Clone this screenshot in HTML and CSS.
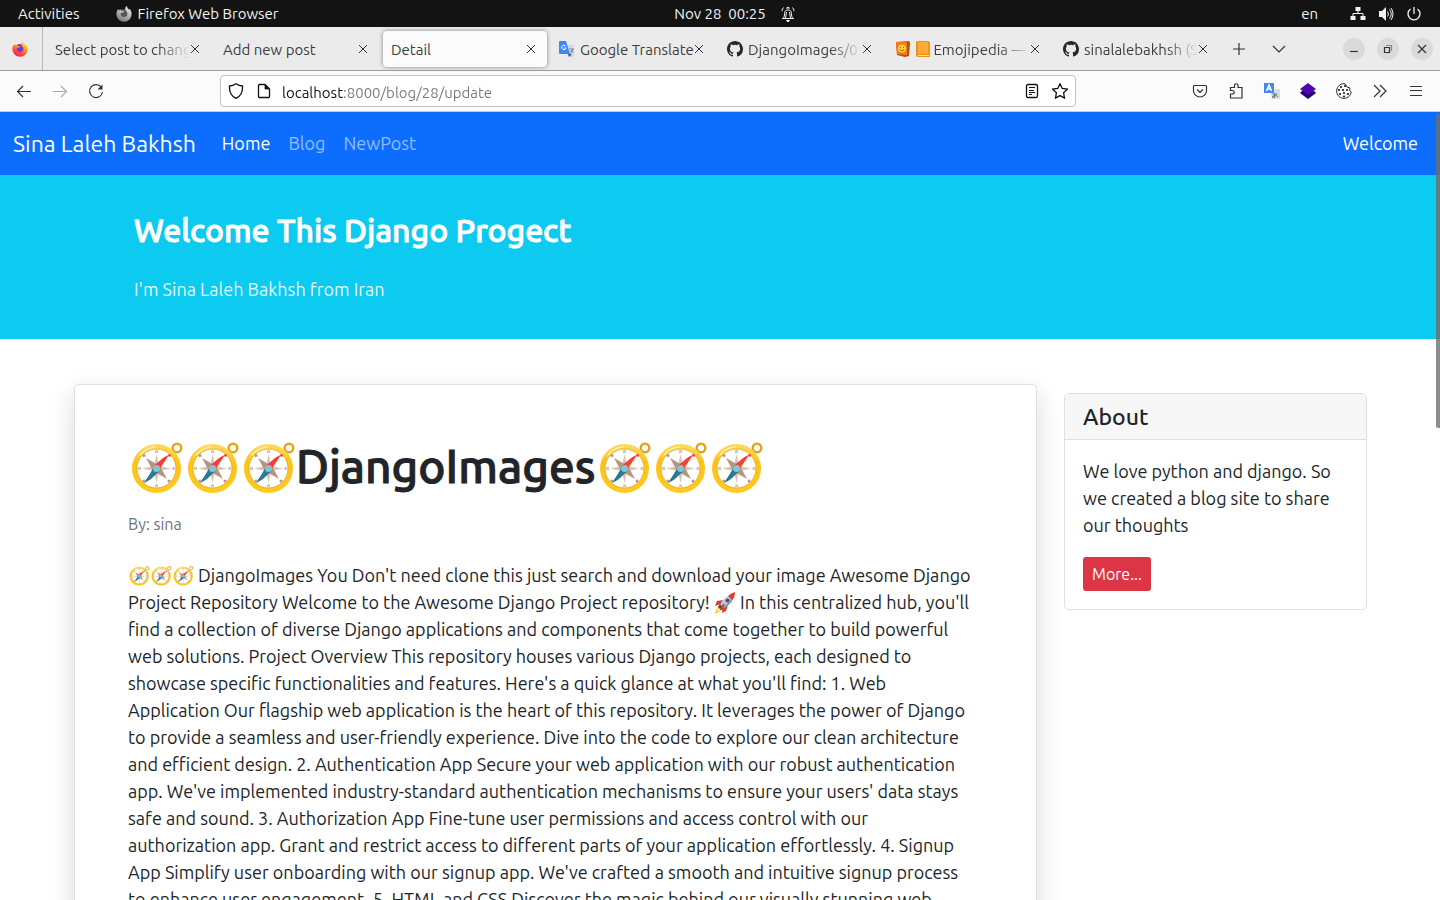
FILE: index.html
```html
<!DOCTYPE html>
<html lang="en">
<head>
<meta charset="utf-8">
<title>Detail</title>
<link rel="stylesheet" href="styles.css">
</head>
<body>
<svg class="defs" aria-hidden="true">
  <defs>
    <linearGradient id="gold" x1="0" y1="0" x2="0" y2="1"><stop offset="0" stop-color="#ffd95a"/><stop offset=".35" stop-color="#fcc21b"/><stop offset="1" stop-color="#ffc91f"/></linearGradient>
    <linearGradient id="fox" x1=".8" y1="0" x2=".3" y2="1"><stop offset="0" stop-color="#fff44f"/><stop offset=".35" stop-color="#ffb01f"/><stop offset=".65" stop-color="#ff5a36"/><stop offset="1" stop-color="#f0187a"/></linearGradient>
    <linearGradient id="foxgray" x1=".8" y1="0" x2=".3" y2="1"><stop offset="0" stop-color="#f2f2f2"/><stop offset="1" stop-color="#777"/></linearGradient>
    <symbol id="compass" viewBox="0 0 56 56">
      <circle cx="49" cy="8" r="4.300" fill="none" stroke="#e2a610" stroke-width="2.400"/>
      <circle cx="28.500" cy="28.500" r="22" fill="#fff" stroke="url(#gold)" stroke-width="5"/>
      <circle cx="28.500" cy="28.500" r="19.500" fill="none" stroke="#e0a100" stroke-width=".7"/>
      <path d="M12 15Q18 8 27 7" fill="none" stroke="#fff0a0" stroke-width="1.600" stroke-linecap="round"/>
      <g fill="#dcc3ae"><path d="M28.500 14l2.500 12 12 2.500-12 2.500-2.500 12-2.500-12-12-2.500 12-2.500z"/><path d="M27 10h3v3h-3zM27 44.500h3v3h-3zM10 27h3v3h-3zM44.500 27h3v3h-3z"/></g>
      <g fill="#b69582"><path d="M18 18l14 8-6 7zM39 39l-14-8 6-7z"/><circle cx="16" cy="15.500" r="1.500"/><circle cx="16" cy="41" r="1.500"/><circle cx="41" cy="41" r="1.500"/></g>
      <path d="M25.500 26l9.500-8q3-2 5.500-3-1 3-3.500 6l-6 9z" fill="#f44336"/>
      <path d="M31.500 31l-8.500 8q-3 2-6.500 4 1.500-4 4-7l5.500-9z" fill="#2a7a90"/>
      <circle cx="41.500" cy="15.500" r="1.400" fill="#f44336"/>
      <circle cx="28.500" cy="28.500" r="3.500" fill="#82c4d8"/>
    </symbol>
    <symbol id="rocket" viewBox="0 0 22 22">
      <path d="M5 13l-3 5-1 4 4-2 4-3z" fill="#ffca28"/><path d="M4 16l-1 4 4-2z" fill="#fff3a0"/>
      <path d="M9 8L3 9l-2 5 6-2zM14 13l-2 6-4 2 1-6z" fill="#d83b30"/>
      <path d="M6 13Q9 5 20 1q1 9-11 16z" fill="#b8cdd6"/><path d="M9 15Q17 10 20 2q0 9-11 15z" fill="#819ba8"/>
      <path d="M14 4q3-3 7-4 0 5-3 8z" fill="#e53935"/><circle cx="13.500" cy="8.500" r="2" fill="#315b70"/>
      <path d="M6 12l4 5-3 1-3-3z" fill="#444f58"/><path d="M10 12l-3 6" stroke="#d83b30" stroke-width="2"/>
    </symbol>
    <symbol id="firefox" viewBox="0 0 16 16">
      <path d="M8 15.800A7.500 7.500 0 0 1 .4 8.200C.3 6 1.200 4.100 2.400 3l.5 1.500L4.300 3c.2 1 .8 1.500 2 1.900 1.100.1 1.900.1 2.200.3L7 6.400 4.600 7.500C4.500 9.800 6 11 8 11c2.600 0 4-2 3.200-4.200C10.700 5.200 9 4 9.200 2.400 9.400 1.200 10.200.4 11 0c0 2.100 1.200 2.900 2.200 3.800l.4-1C15 4.600 15.700 6.200 15.600 8.500A7.500 7.500 0 0 1 8 15.800z"/>
    </symbol>
    <symbol id="github" viewBox="0 0 16 16"><path fill="#24292f" d="M8 0C3.580 0 0 3.580 0 8c0 3.540 2.290 6.530 5.470 7.590.4.070.55-.17.55-.38 0-.19-.01-.82-.01-1.490-2.010.37-2.530-.49-2.690-.94-.09-.23-.48-.94-.82-1.130-.28-.15-.68-.52-.01-.53.63-.01 1.080.58 1.230.82.72 1.210 1.870.87 2.330.66.07-.52.28-.87.51-1.070-1.780-.2-3.640-.89-3.640-3.950 0-.87.31-1.590.82-2.150-.08-.2-.36-1.020.08-2.120 0 0 .67-.21 2.200.82a7.600 7.600 0 0 1 4 0c1.530-1.040 2.200-.82 2.200-.82.44 1.100.16 1.920.08 2.120.51.56.82 1.270.82 2.150 0 3.070-1.870 3.750-3.650 3.950.29.25.54.73.54 1.480 0 1.070-.01 1.930-.01 2.200 0 .21.15.46.55.38A8 8 0 0 0 16 8c0-4.420-3.580-8-8-8z"/></symbol>
    <symbol id="close" viewBox="0 0 10 10"><path d="M1 1l8 8M9 1L1 9" fill="none" stroke="#333" stroke-width="1"/></symbol>
  </defs>
</svg>

<header class="desktop">
  <div class="desktop-left">
    <span>Activities</span>
    <span class="app"><svg class="i16" viewBox="0 0 16 16"><circle cx="8" cy="8" r="5" fill="#555"/><use href="#firefox" fill="url(#foxgray)"/></svg>Firefox Web Browser</span>
  </div>
  <div class="clock"><time>Nov 28&nbsp; 00:25</time>
    <svg class="i16" viewBox="0 0 16 16" fill="none" stroke="#f2f2f2"><path d="M2 12.500h12M3.500 12c1.500-2 .5-4 1.500-6.500.7-2 5.300-2 6 0 1 2.500 0 4.500 1.500 6.500M6.500 6c-.8 2-.2 4-1 6M9.500 6c.8 2 .2 4 1 6M7 3V1.500h2V3M3.500 1.500Q2 3 2 5M12.500 1.500Q14 3 14 5"/><path d="M6.500 14.500h3L8 16z" fill="#f2f2f2"/></svg>
  </div>
  <div class="status">
    <span class="lang">en</span>
    <svg class="i16" viewBox="0 0 16 16" fill="#f2f2f2"><path d="M5.500 1h5v4h-5zM.5 10h5v4h-5zM10.500 10h5v4h-5z"/><path d="M8 5v3M3 10V7.500h10V10" fill="none" stroke="#f2f2f2"/></svg>
    <svg class="i16" viewBox="0 0 16 16" fill="#f2f2f2"><path d="M1 5h3l4-4v14l-4-4H1z"/><path d="M9.500 5.500q2 2.500 0 5M11.500 3.500q3.500 4.500 0 9M13 2q4 6 0 12" fill="none" stroke="#f2f2f2"/></svg>
    <svg class="i16" viewBox="0 0 16 16" fill="none" stroke="#f2f2f2" stroke-width="1.300"><path d="M8 1v7M4.500 3a6 6 0 1 0 7 0"/></svg>
  </div>
</header>

<div class="tabs">
  <div class="pinned"><svg class="i16" viewBox="0 0 16 16"><circle cx="8" cy="8" r="5" fill="#7139d6"/><use href="#firefox" fill="url(#fox)"/></svg></div>
  <div class="tab"><span class="title fade">Select post to change</span><button class="close" aria-label="Close tab"><svg><use href="#close"/></svg></button></div>
  <div class="tab"><span class="title">Add new post</span><button class="close" aria-label="Close tab"><svg><use href="#close"/></svg></button></div>
  <div class="tab active"><span class="title">Detail</span><button class="close" aria-label="Close tab"><svg><use href="#close"/></svg></button></div>
  <div class="tab"><svg class="i16" viewBox="0 0 16 16"><path d="M8 4h7v12H9z" fill="#d9d9d9"/><path d="M9 13h4l-3 3z" fill="#3651a8"/><path d="M1 0h6l4 13H1a1 1 0 0 1-1-1V1a1 1 0 0 1 1-1z" fill="#4285f4"/><path d="M6.500 5A2.200 2.200 0 1 0 7 7H5" stroke="#fff" fill="none"/><path d="M10.500 8H15M11.500 12L14 8M12 9l2.500 3" stroke="#6c8794" fill="none"/></svg><span class="title">Google Translate</span><button class="close" aria-label="Close tab"><svg><use href="#close"/></svg></button></div>
  <div class="tab"><svg class="i16"><use href="#github"/></svg><span class="title fade">DjangoImages/0</span><button class="close" aria-label="Close tab"><svg><use href="#close"/></svg></button></div>
  <div class="tab"><svg class="i16" viewBox="0 0 16 16"><path d="M1 1l13-1 1 2-1 13-4 1-8-2z" fill="#ba4b15"/><path d="M1 1h11v13L2 13z" fill="#f57c18"/><circle cx="7" cy="7.500" r="4" fill="#ffd13b"/><path d="M5.500 6v1M8.500 6v1M4.700 8.500q2.300 2.500 4.600 0" fill="none" stroke="#8a4a0b" stroke-width=".8"/></svg><span class="title fade"><svg class="book" viewBox="0 0 14 16"><path d="M1 0h11a2 2 0 0 1 2 2v14H2a2 2 0 0 1-2-2V1z" fill="#f39019"/><path d="M2 1h10v12H2z" fill="#ffa936"/><path d="M2 14h11v1H2z" fill="#ffe0aa"/></svg> Emojipedia —</span><button class="close" aria-label="Close tab"><svg><use href="#close"/></svg></button></div>
  <div class="tab"><svg class="i16"><use href="#github"/></svg><span class="title fade">sinalalebakhsh (S</span><button class="close" aria-label="Close tab"><svg><use href="#close"/></svg></button></div>
  <button class="tool" aria-label="New tab"><svg class="i16" viewBox="0 0 16 16"><path d="M8 2v12M2 8h12"/></svg></button>
  <button class="tool" aria-label="List all tabs"><svg class="i16" viewBox="0 0 16 16"><path d="M2 5l6 6 6-6"/></svg></button>
  <div class="window-controls">
    <button aria-label="Minimize"><svg class="i16" viewBox="0 0 16 16"><path d="M4 10.500h8"/></svg></button>
    <button aria-label="Restore"><svg class="i16" viewBox="0 0 16 16"><path d="M4.500 6.500h5v5h-5z"/><path d="M6 4.500h5.500V10" stroke="#888"/></svg></button>
    <button aria-label="Close"><svg class="i16" viewBox="0 0 16 16"><path d="M4 4l8 8M12 4l-8 8"/></svg></button>
  </div>
</div>

<div class="toolbar">
  <div class="group">
    <button class="tool" aria-label="Back"><svg class="i16" viewBox="0 0 16 16"><path d="M15 8.500H1.500M7 3L1.500 8.500 7 14"/></svg></button>
    <button class="tool dim" aria-label="Forward"><svg class="i16" viewBox="0 0 16 16"><path d="M1 8.500h13.500M9 3l5.500 5.500L9 14"/></svg></button>
    <button class="tool" aria-label="Reload"><svg class="i16" viewBox="0 0 16 16"><path d="M13.500 4.500A6.500 6.500 0 1 0 14.500 9"/><path d="M14.500 1.500v5h-5z" fill="#333" stroke="none"/></svg></button>
  </div>
  <div class="address">
    <svg class="i16" viewBox="0 0 16 16"><path d="M8 .8q3 2 6.500 2.200Q15 12 8 15.300 1 12 1.500 3 5 2.800 8 .8z"/></svg>
    <svg class="i16" viewBox="0 0 16 16"><path d="M3.500 1.500H9L13.500 6v7.500a1 1 0 0 1-1 1h-9a1 1 0 0 1-1-1v-11a1 1 0 0 1 1-1z"/><path d="M9 1.500V6h4.500z" fill="#111" stroke-width=".8"/></svg>
    <input class="url" type="text" aria-label="Address" value="localhost:8000/blog/28/update">
    <svg class="i16" viewBox="0 0 16 16"><rect x="2.500" y="1.500" width="11" height="13" rx="1.500"/><path d="M5 4.500h6M5 7.500h5M5 9.500h6M5 11.500h3" stroke-width="1"/></svg>
    <svg class="i16" viewBox="0 0 16 16"><path d="M8 .8l2.200 4.700 5.200.7-3.800 3.600.9 5.300L8 12.600l-4.500 2.500.9-5.300L.6 6.200l5.200-.7z"/></svg>
  </div>
  <div class="group">
    <button class="tool" aria-label="Pocket"><svg class="i16" viewBox="0 0 16 16"><path d="M2.500 2.500h11a1 1 0 0 1 1 1V7.500a6.500 6.500 0 0 1-13 0v-4a1 1 0 0 1 1-1zM5 6.500l3 3 3-3"/></svg></button>
    <button class="tool" aria-label="Extensions"><svg class="i16" viewBox="0 0 16 16"><path d="M2.500 6V4.500h4V2.500a1.700 1.700 0 0 1 3.500 0v2h4v10.500H2.500V11h2a1.500 1.500 0 0 0 0-3.500h-2z"/></svg></button>
    <button class="tool" aria-label="Translate"><svg class="i16" viewBox="0 0 16 16"><path d="M6 6h10v10H8z" fill="#d7dde0" stroke="none"/><path d="M0 0h10v10H0z" fill="#4285f4" stroke="none"/><path d="M2.500 8L5 2l2.500 6M3.500 6h3" stroke="#fff" stroke-width="1.500"/><path d="M8.500 11h4M10.500 10q-1 3 0 5M13 10.500q-5 6-4.500 3 3-2 5.500 0" stroke="#607d8b" stroke-width="1"/></svg></button>
    <button class="tool" aria-label="Layers extension"><svg class="i16" viewBox="0 0 16 16"><path d="M0 10l2-2h12l2 2-8 6z" fill="#24006f" stroke="none"/><path d="M0 6l8-6 8 6-8 6z" fill="#4d08b0" stroke="none"/></svg></button>
    <button class="tool" aria-label="Cookie extension"><svg class="i16" viewBox="0 0 16 16"><path d="M9 .7A7.400 7.400 0 1 0 15.300 9L13.500 7.500 14 5 11 4z" stroke-width="1"/><g fill="#111" stroke="none"><circle cx="5" cy="4" r="1"/><circle cx="9" cy="3" r="1"/><circle cx="3" cy="7" r="1"/><circle cx="7" cy="7" r="1.100"/><circle cx="11" cy="7" r="1"/><circle cx="4" cy="11" r="1.100"/><circle cx="8" cy="10" r="1"/><circle cx="12" cy="11" r="1.100"/><circle cx="8" cy="13.500" r="1"/></g></svg></button>
    <button class="tool" aria-label="More tools"><svg class="i16" viewBox="0 0 16 16"><path d="M2 2l6 6-6 6M8 2l6 6-6 6"/></svg></button>
    <button class="tool" aria-label="Menu"><svg class="i16" viewBox="0 0 16 16"><path d="M2 3.500h12M2 7.500h12M2 12.500h12" stroke-width="1"/></svg></button>
  </div>
</div>

<div class="page">
  <nav class="navbar">
    <a class="brand" href="#">Sina Laleh Bakhsh</a>
    <a class="current" href="#">Home</a>
    <a href="#">Blog</a>
    <a href="#">NewPost</a>
    <span class="welcome">Welcome</span>
  </nav>
  <section class="hero">
    <div class="container">
      <h2>Welcome This Django Progect</h2>
      <p>I'm Sina Laleh Bakhsh from Iran</p>
    </div>
  </section>
  <main class="container content">
    <article class="card post">
      <h1><svg class="emoji"><use href="#compass"/></svg><svg class="emoji"><use href="#compass"/></svg><svg class="emoji"><use href="#compass"/></svg>DjangoImages<svg class="emoji"><use href="#compass"/></svg><svg class="emoji"><use href="#compass"/></svg><svg class="emoji"><use href="#compass"/></svg></h1>
      <p class="byline">By: sina</p>
      <p class="text"><svg class="emoji"><use href="#compass"/></svg><svg class="emoji"><use href="#compass"/></svg><svg class="emoji"><use href="#compass"/></svg> DjangoImages You Don't need clone this just search and download your image Awesome Django<br>
      Project Repository Welcome to the Awesome Django Project repository! <svg class="emoji"><use href="#rocket"/></svg> In this centralized hub, you'll<br>
      find a collection of diverse Django applications and components that come together to build powerful<br>
      web solutions. Project Overview This repository houses various Django projects, each designed to<br>
      showcase specific functionalities and features. Here's a quick glance at what you'll find: 1. Web<br>
      Application Our flagship web application is the heart of this repository. It leverages the power of Django<br>
      to provide a seamless and user-friendly experience. Dive into the code to explore our clean architecture<br>
      and efficient design. 2. Authentication App Secure your web application with our robust authentication<br>
      app. We've implemented industry-standard authentication mechanisms to ensure your users' data stays<br>
      safe and sound. 3. Authorization App Fine-tune user permissions and access control with our<br>
      authorization app. Grant and restrict access to different parts of your application effortlessly. 4. Signup<br>
      App Simplify user onboarding with our signup app. We've crafted a smooth and intuitive signup process<br>
      to enhance user engagement. 5. HTML and CSS Discover the magic behind our visually stunning web</p>
    </article>
    <aside class="card about">
      <h5>About</h5>
      <div class="about-body">
        <p>We love python and django. So we created a blog site to share our thoughts</p>
        <a class="more" href="#">More...</a>
      </div>
    </aside>
  </main>
  <div class="scroll-thumb"></div>
</div>
</body>
</html>
```
FILE: styles.css
```css
* { box-sizing: border-box; }
body {
  margin: 0;
  height: 100vh;
  overflow: hidden;
  display: flex;
  flex-direction: column;
  font-family: Ubuntu, "Noto Sans", sans-serif;
  font-size: 18px;
  line-height: 27px;
  color: #212529;
  background: #fff;
}
h1, h2, h5, p { margin: 0; font-weight: 400; }
h1, h2, h5 { font-weight: 500; }
h1, h2 { -webkit-text-stroke: 1px currentColor; }
a { color: inherit; text-decoration: none; }
button { padding: 0; border: 0; background: none; font: inherit; }
svg { flex: none; }
.defs { position: absolute; width: 0; height: 0; }
.i16 { width: 16px; height: 16px; }

.desktop {
  flex: none;
  height: 27px;
  display: grid;
  grid-template-columns: 1fr auto 1fr;
  align-items: center;
  padding: 0 18px;
  background: #131313;
  color: #f2f2f2;
  font-size: 15px;
}
.desktop-left, .clock, .status, .app { display: flex; align-items: center; }
.desktop-left { gap: 36px; }
.app { gap: 6px; }
.clock { gap: 14px; padding-left: 30px; }
.status { justify-content: flex-end; gap: 12px; }
.lang { padding-right: 20px; }

.tabs {
  flex: none;
  height: 44px;
  display: flex;
  align-items: center;
  background: #ebebeb;
  border-bottom: 1px solid #9e9ea0;
  color: #3d3d3d;
  font-size: 15px;
}
.pinned {
  width: 43px;
  height: 43px;
  margin-right: 4px;
  padding-left: 12px;
  display: flex;
  align-items: center;
  border-right: 1px solid #b8b8b8;
}
.tab {
  flex: 0 1 164px;
  min-width: 0;
  height: 36px;
  margin-right: 4px;
  padding: 0 8px;
  display: flex;
  align-items: center;
  gap: 5px;
  border-radius: 4px;
}
.tab.active { background: #fbfbfb; box-shadow: 0 0 4px rgba(0, 0, 0, .45); }
.title { flex: 1; min-width: 0; padding-top: 2px; overflow: hidden; white-space: nowrap; }
.book { width: 14px; height: 16px; vertical-align: -2px; }
.fade {
  -webkit-mask-image: linear-gradient(to left, transparent, #000 32px);
  mask-image: linear-gradient(to left, transparent, #000 32px);
}
.close { width: 16px; height: 16px; margin-left: -8px; display: flex; align-items: center; justify-content: center; }
.close svg { width: 10px; height: 10px; }
.tool { width: 36px; height: 32px; display: flex; align-items: center; justify-content: center; }
.tool svg, .window-controls svg { fill: none; stroke: #333; stroke-width: 1.2; }
.tabs > .tool { width: 40px; flex: none; }
.tab + .tool { margin-left: -4px; }
.dim { opacity: .4; }
.window-controls { margin-left: auto; padding-right: 7px; display: flex; gap: 12px; }
.window-controls button {
  width: 22px;
  height: 22px;
  display: flex;
  align-items: center;
  justify-content: center;
  border-radius: 50%;
  background: #dadada;
}

.toolbar {
  flex: none;
  height: 41px;
  display: flex;
  align-items: center;
  justify-content: space-between;
  gap: 106px;
  padding: 0 6px;
  background: #fbfbfb;
  border-bottom: 1px solid #ccc;
}
.group { flex: none; display: flex; }
.address {
  flex: 1;
  height: 32px;
  display: flex;
  align-items: center;
  gap: 12px;
  padding: 0 7px;
  background: #fff;
  border: 1px solid #c3c3c5;
  border-radius: 4px;
}
.address svg { fill: none; stroke: #111; stroke-width: 1.3; }
.url {
  flex: 1;
  min-width: 0;
  height: 26px;
  margin-left: -2px;
  padding: 2px 0 0;
  border: 0;
  outline: 0;
  font: 15px/24px Ubuntu, "Noto Sans", sans-serif;
  color: transparent;
  background: linear-gradient(to right, #111 62px, #777 62px);
  -webkit-background-clip: text;
  background-clip: text;
}

.page { position: relative; flex: 1; min-height: 0; overflow: hidden; }
.navbar {
  height: 63px;
  display: flex;
  align-items: center;
  gap: 18px;
  padding: 0 22px 0 13px;
  background: #0d6efd;
  color: rgba(255, 255, 255, .55);
}
.brand { margin-right: 8px; font-size: 23px; color: #fff; }
.current { color: #fff; }
.welcome { margin-left: auto; color: #fff; }
.container { width: 100%; max-width: 1320px; margin: 0 auto; }
.hero { padding: 36px 0; background: #0dcaf0; color: #fff; }
.hero .container { padding: 0 74px; }
.hero h2 { margin-bottom: 27px; font-size: 32px; line-height: 38px; }
.hero p { color: rgba(255, 255, 255, .9); }
.content {
  display: grid;
  grid-template-columns: 963fr 303fr;
  gap: 27px;
  align-items: start;
  padding: 45px 13px 0 14px;
}
.card { min-width: 0; background: #fff; border: 1px solid #dfdfdf; border-radius: 5px; }
.post { padding: 54px 53px; box-shadow: 0 9px 27px rgba(0, 0, 0, .15); }
.post h1 { font-size: 46px; line-height: 54px; white-space: nowrap; }
h1 .emoji { width: 56px; height: 56px; vertical-align: -11px; margin: -2px 0; }
.byline { margin: 18px 0 26px; font-size: 16px; line-height: 24px; color: #6c757d; }
.text { white-space: nowrap; }
.text .emoji { width: 22px; height: 22px; vertical-align: -5px; }
.about { margin-top: 9px; }
.about h5 {
  padding: 9px 18px;
  font-size: 23px;
  line-height: 27px;
  background: #f7f7f7;
  border-bottom: 1px solid #dfdfdf;
  border-radius: 4px 4px 0 0;
}
.about-body { padding: 18px; }
.about p { margin-bottom: 18px; }
.more {
  display: inline-block;
  padding: 5px 9px;
  border-radius: 3px;
  background: #dc3545;
  color: #fff;
  font-size: 16px;
  line-height: 24px;
  vertical-align: top;
}
.scroll-thumb {
  position: absolute;
  top: 2px;
  right: 0;
  width: 4px;
  height: 314px;
  border-radius: 2px 0 0 2px;
  background: rgba(110, 110, 110, .8);
}
```
